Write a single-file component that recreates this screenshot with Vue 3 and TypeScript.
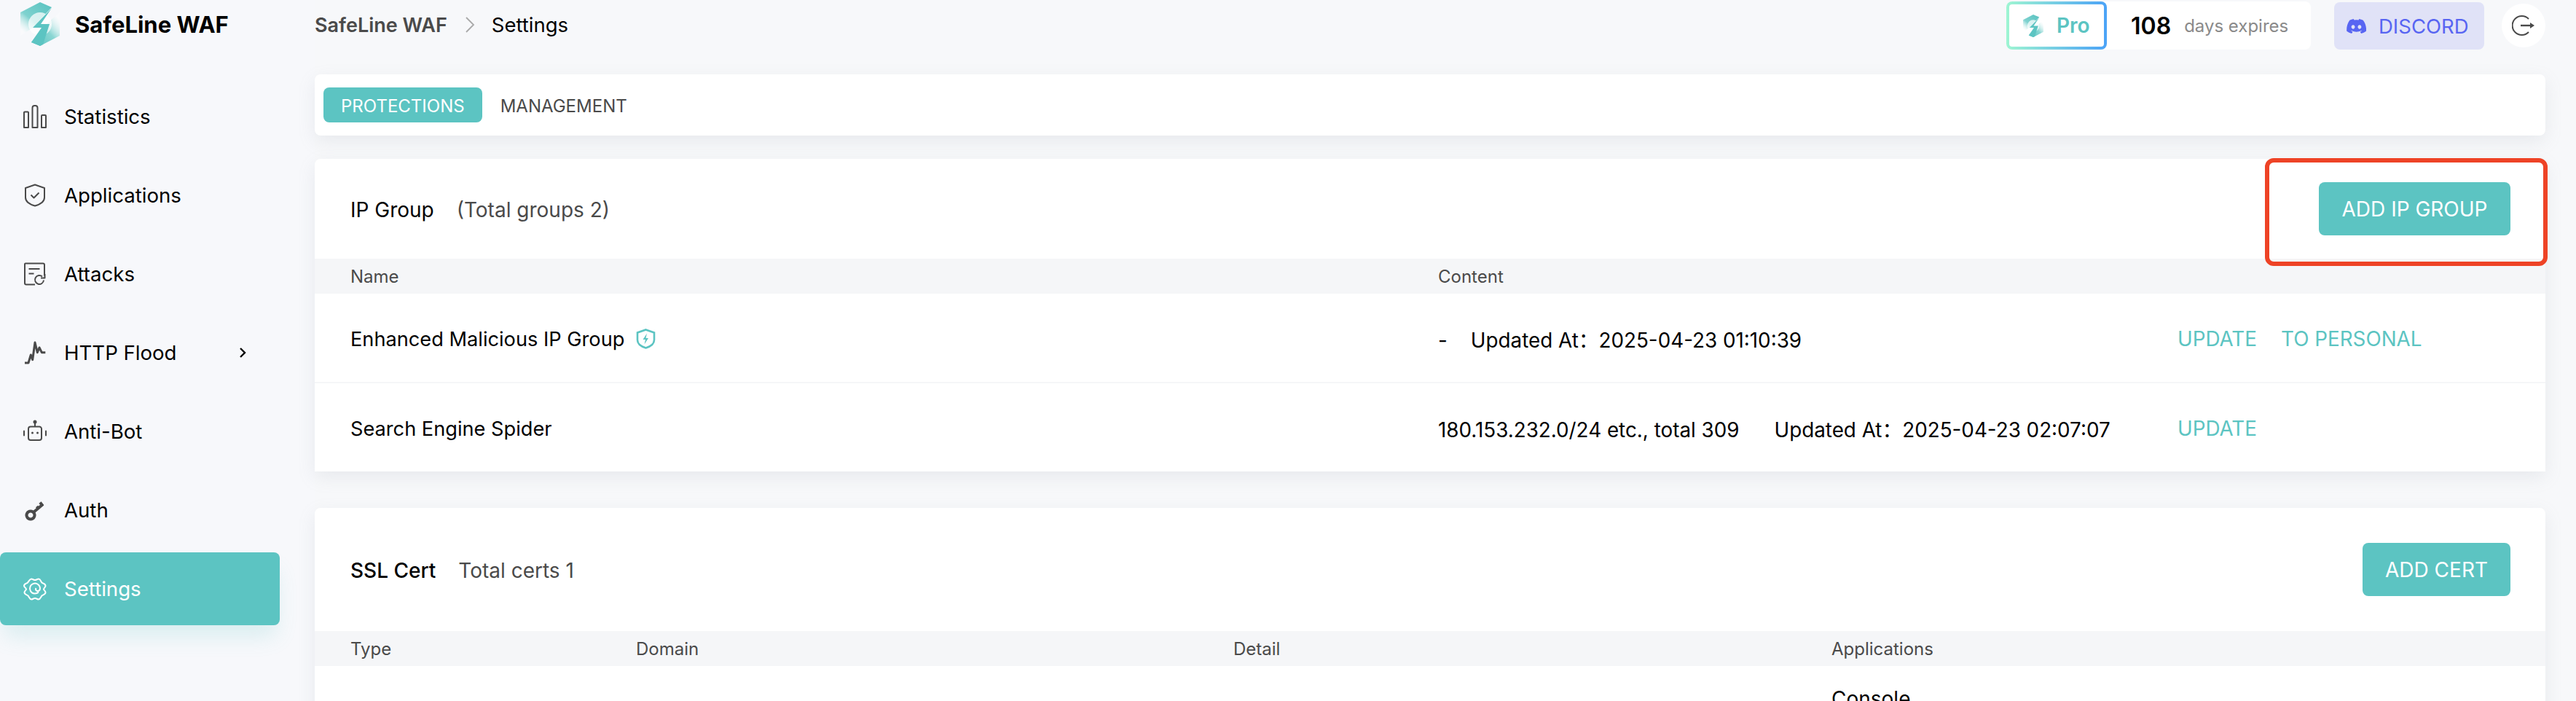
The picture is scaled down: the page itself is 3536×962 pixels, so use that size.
<script setup lang="ts">
interface NavItem {
  label: string
  active?: boolean
  arrow?: boolean
  strokeWidth?: number
  strokes: string[]
  fills?: string[]
}

const navItems: NavItem[] = [
  {
    label: 'Statistics',
    strokes: [
      'M1 10.5a1 1 0 0 1 1-1h4a1 1 0 0 1 1 1V31H1z',
      'M12.5 4a3 3 0 0 1 3-3h1a3 3 0 0 1 3 3v27h-7z',
      'M25 15a1 1 0 0 1 1-1h4a1 1 0 0 1 1 1v16h-6z'
    ]
  },
  {
    label: 'Applications',
    strokes: [
      'M16 1.5 29 6v13c0 5.5-6 9.5-13 11.5C9 28.5 3 24.5 3 19V6z',
      'M10.5 15.5l4 4 7-7'
    ]
  },
  {
    label: 'Attacks',
    strokes: [
      'M16 30.5H4a2 2 0 0 1-2-2v-26a1 1 0 0 1 1-1h24a2 2 0 0 1 2 2v15',
      'M7.5 9h15',
      'M7.5 15.5h7',
      'M28 24.5a6 6 0 1 1-2-5',
      'M24 21.5h5.5V16'
    ]
  },
  {
    label: 'HTTP Flood',
    arrow: true,
    strokeWidth: 3,
    strokes: ['M2 30h5l3.3-11 2.4 6.7L16 2l3.3 13.7L22 9l3.3 6.7h5']
  },
  {
    label: 'Anti-Bot',
    strokes: [
      'M7 12.5a3 3 0 0 1 3-3h12a3 3 0 0 1 3 3V25a3 3 0 0 1-3 3H10a3 3 0 0 1-3-3z',
      'M16 9V4'
    ],
    fills: [
      'M13.5 3a2.5 2.5 0 1 0 5 0 2.5 2.5 0 0 0-5 0z',
      'M11 18a1.5 1.5 0 1 0 3 0 1.5 1.5 0 0 0-3 0z',
      'M18 18a1.5 1.5 0 1 0 3 0 1.5 1.5 0 0 0-3 0z',
      'M0 15.5a1 1 0 0 1 2 0v6a1 1 0 0 1-2 0z',
      'M30 15.5a1 1 0 0 1 2 0v6a1 1 0 0 1-2 0z'
    ]
  },
  {
    label: 'Auth',
    strokeWidth: 4,
    strokes: [
      'M14 19 27 8',
      'M21.5 14.5 18.5 11',
      'M26.5 10 23 5.5',
      'M10 17.5a5.5 5.5 0 1 0 .01 0z'
    ]
  },
  {
    label: 'Settings',
    active: true,
    strokes: [
      'M11 2.5c2 0 3 1.5 5 1.5s3-1.5 5-1.5c2.5 0 3 3.5 4.5 5s5 1.5 5 4.5c0 2-2.5 3-2.5 4.5s2.5 2.5 2.5 4.5c0 3-3.5 3-5 4.5s-2 5-4.5 5c-2 0-3-1.5-5-1.5s-3 1.5-5 1.5c-2.5 0-3-3.5-4.5-5s-5-1.5-5-4.5c0-2 2.5-3 2.5-4.5S1 14 1 12c0-3 3.5-3 5-4.5s2.5-5 5-5z',
      'M21 20.5a7 7 0 1 1 2-5c0 2.5-2 4-4 3.5-2-.5-2.5-2.5-1.5-4'
    ]
  }
]

const ipRows = [
  { name: 'Enhanced Malicious IP Group', builtin: true, summary: '-', updated: '2025-04-23 01:10:39', actions: ['UPDATE', 'TO PERSONAL'] },
  { name: 'Search Engine Spider', builtin: false, summary: '180.153.232.0/24 etc., total 309', updated: '2025-04-23 02:07:07', actions: ['UPDATE'] }
]
</script>

<template>
  <div class="page">
    <aside class="sidebar">
      <div class="brand">
        <svg class="brand-logo" viewBox="0 0 54 60" aria-hidden="true">
          <defs>
            <linearGradient id="hexA" x1="0.8" y1="0" x2="0.1" y2="0.9">
              <stop offset="0" stop-color="#5cc4c2" />
              <stop offset="0.6" stop-color="#7fd2cf" />
              <stop offset="1" stop-color="#ffffff" stop-opacity="0.35" />
            </linearGradient>
            <linearGradient id="hexB" x1="0.25" y1="1" x2="1" y2="0.2">
              <stop offset="0" stop-color="#5cc4c2" />
              <stop offset="0.5" stop-color="#8ad6d3" />
              <stop offset="1" stop-color="#ffffff" stop-opacity="0.3" />
            </linearGradient>
          </defs>
          <path d="M27 0 43 7 17 35 0 46V14z" fill="url(#hexA)" />
          <path d="M54 14V46L27 60 15 55 40 26z" fill="url(#hexB)" />
          <circle cx="27" cy="30" r="16" fill="#ffffff" opacity="0.72" />
          <path d="M43 8 17 35H29L15 55 27 60 31 58 40 30H28z" fill="#5cc4c2" />
        </svg>
        <span class="brand-name">SafeLine WAF</span>
      </div>
      <nav class="nav">
        <a v-for="item in navItems" :key="item.label" class="nav-item" :class="{ 'is-active': item.active }">
          <svg class="nav-icon" viewBox="0 0 32 32" aria-hidden="true">
            <path
              v-for="d in item.strokes"
              :key="d"
              :d="d"
              fill="none"
              stroke="currentColor"
              :stroke-width="item.strokeWidth ?? 2"
              stroke-linejoin="round"
            />
            <path v-for="d in item.fills" :key="d" :d="d" fill="currentColor" />
          </svg>
          <span class="nav-label">{{ item.label }}</span>
          <svg v-if="item.arrow" class="nav-arrow" viewBox="0 0 10 14" aria-hidden="true">
            <path d="M2 1l6 6-6 6" fill="none" stroke="#000" stroke-width="2.4" />
          </svg>
        </a>
      </nav>
    </aside>

    <main class="main">
      <header class="topbar">
        <div class="crumbs">
          <span class="crumb-root">SafeLine WAF</span>
          <svg class="crumb-sep" viewBox="0 0 14 24" aria-hidden="true">
            <path d="M2 2l10 10L2 22" fill="none" stroke="#a9a9a9" stroke-width="1.8" />
          </svg>
          <span class="crumb-current">Settings</span>
        </div>
        <div class="license">
          <div class="pro-tag">
            <svg class="pro-logo" viewBox="0 0 54 60" aria-hidden="true">
              <path d="M27 0 43 7 17 35 0 46V14z" fill="url(#hexA)" />
              <path d="M54 14V46L27 60 15 55 40 26z" fill="url(#hexB)" />
              <circle cx="27" cy="30" r="16" fill="#ffffff" opacity="0.72" />
              <path d="M43 8 17 35H29L15 55 27 60 31 58 40 30H28z" fill="#5cc4c2" />
            </svg>
            <span>Pro</span>
          </div>
          <strong class="license-days">108</strong>
          <span class="license-text">days expires</span>
        </div>
        <a class="discord">
          <svg class="discord-icon" viewBox="0 0 24 18" aria-hidden="true">
            <path d="M20.3 1.5A20 20 0 0 0 15.4 0l-.6 1.3a18 18 0 0 0-5.5 0L8.6 0a20 20 0 0 0-4.9 1.5C.6 6.1-.3 10.6.1 15a20 20 0 0 0 6.1 3l1.3-2.1a13 13 0 0 1-2-1l.5-.4a14.3 14.3 0 0 0 12.2 0l.5.4a13 13 0 0 1-2 1l1.3 2.1a20 20 0 0 0 6.1-3c.5-5.100-.9-9.500-3.800-13.500zM8 12.3c-1.2 0-2.2-1.1-2.2-2.4S6.800 7.500 8 7.500s2.200 1.100 2.200 2.400-1 2.400-2.200 2.400zm8 0c-1.200 0-2.200-1.100-2.200-2.400s1-2.400 2.200-2.400 2.200 1.100 2.200 2.400-1 2.400-2.200 2.400z" fill="#5865f2" />
          </svg>
          DISCORD
        </a>
        <button class="logout" type="button" aria-label="Log out">
          <svg viewBox="0 0 32 30" aria-hidden="true">
            <path d="M23 6A13 13 0 1 0 23 24" fill="none" stroke="#4a4a4a" stroke-width="2" />
            <path d="M12 15h14" stroke="#4a4a4a" stroke-width="2.4" />
            <path d="M25 11l6 4-6 4z" fill="#4a4a4a" />
          </svg>
        </button>
      </header>

      <div class="tabs card">
        <span class="tab is-active">PROTECTIONS</span>
        <span class="tab">MANAGEMENT</span>
      </div>

      <section class="card section ip-section">
        <div class="section-head">
          <span class="section-title">IP Group</span>
          <span class="section-sub ip-sub">(Total groups 2)</span>
          <button class="primary ip-add" type="button">ADD IP GROUP</button>
        </div>
        <div class="thead ip-grid">
          <span>Name</span>
          <span>Content</span>
        </div>
        <div v-for="row in ipRows" :key="row.name" class="ip-row ip-grid">
          <span class="ip-name">
            {{ row.name }}
            <svg v-if="row.builtin" class="builtin" viewBox="0 0 27 28" aria-hidden="true">
              <path d="M13.5 1.5 25 5.5v10c0 5-5 9-11.5 11C7 24.5 2 20.500 2 15.5v-10z" fill="none" stroke="#5cc4c2" stroke-width="2.6" />
              <path d="M15 6.5 9.5 15H13l-1.500 6.500L17 13h-3.500z" fill="#5cc4c2" />
            </svg>
          </span>
          <span class="ip-content">
            <span class="ip-summary" :class="{ 'is-empty': row.summary === '-' }">{{ row.summary }}</span>
            <span class="ip-updated">Updated At：</span>
            <span>{{ row.updated }}</span>
          </span>
          <span class="ip-actions">
            <a v-for="action in row.actions" :key="action">{{ action }}</a>
          </span>
        </div>
        <div class="highlight" aria-hidden="true"></div>
      </section>

      <section class="card section cert-section">
        <div class="section-head">
          <span class="section-title is-medium">SSL Cert</span>
          <span class="section-sub cert-sub">Total certs 1</span>
          <button class="primary cert-add" type="button">ADD CERT</button>
        </div>
        <div class="thead cert-grid">
          <span>Type</span>
          <span>Domain</span>
          <span>Detail</span>
          <span>Applications</span>
        </div>
        <div class="cert-row cert-grid">
          <span></span>
          <span></span>
          <span></span>
          <span>Console</span>
        </div>
      </section>
    </main>
  </div>
</template>

<style scoped>
.page {
  background: #f7f8fa;
  color: #000;
  display: flex;
  font-family: Inter, 'Noto Sans CJK SC', sans-serif;
  height: 962px;
  overflow: hidden;
  width: 3536px;
}

.sidebar {
  background: #f7f8fb;
  flex: 0 0 432px;
}

.brand {
  align-items: center;
  display: flex;
  gap: 21px;
  height: 66px;
  margin-bottom: 44px;
  padding-left: 28px;
}

.brand-logo {
  height: 60px;
  width: 54px;
}

.brand-name {
  font-size: 31px;
  font-weight: 700;
  white-space: nowrap;
}

.nav {
  display: flex;
  flex-direction: column;
  gap: 8px;
  width: 384px;
}

.nav-item {
  align-items: center;
  border-radius: 8px;
  color: #4a4a4a;
  display: flex;
  height: 100px;
  padding-left: 32px;
}

.nav-icon {
  flex: 0 0 32px;
  height: 32px;
  width: 32px;
}

.nav-label {
  color: #000;
  font-size: 27.6px;
  margin-left: 24px;
}

.nav-arrow {
  height: 14px;
  margin-left: 86px;
  width: 10px;
}

.nav-item.is-active {
  background: #5cc4c2;
  box-shadow: 0 20px 30px -6px rgba(92, 196, 194, 0.2);
  color: #fff;
}

.nav-item.is-active .nav-label {
  color: #fff;
}

.main {
  flex: 1;
  min-width: 0;
  padding-right: 42px;
}

.topbar {
  align-items: flex-start;
  box-sizing: border-box;
  display: flex;
  height: 102px;
  padding-top: 2px;
}

.crumbs {
  align-items: center;
  box-sizing: border-box;
  display: flex;
  height: 66px;
  margin-right: auto;
  padding-bottom: 2px;
}

.crumb-root {
  color: #4a4a4a;
  font-size: 27px;
  font-weight: 600;
}

.crumb-sep {
  height: 24px;
  margin: 0 23px 0 24px;
  width: 14px;
}

.crumb-current {
  font-size: 27.5px;
}

.license {
  align-items: center;
  background: #fff;
  border-radius: 8px;
  display: flex;
  height: 66px;
  width: 418px;
}

.pro-tag {
  align-items: center;
  background: linear-gradient(#fff, #fff) padding-box, linear-gradient(90deg, #9ef5d2, #4ba3f7) border-box;
  border: 4px solid transparent;
  border-radius: 8px;
  box-sizing: border-box;
  color: #5cc4c2;
  display: flex;
  flex: 0 0 138px;
  font-size: 28px;
  font-weight: 600;
  gap: 18px;
  height: 66px;
  padding-left: 19px;
}

.pro-logo {
  height: 31px;
  width: 28px;
}

.license-days {
  font-size: 32px;
  font-weight: 600;
  margin-left: 33px;
}

.license-text {
  color: #8a8a8a;
  font-size: 24px;
  margin-left: 18px;
}

.discord {
  align-items: center;
  background: #e0e2f7;
  border-radius: 8px;
  box-sizing: border-box;
  color: #5865f2;
  display: flex;
  font-size: 27.5px;
  font-weight: 400;
  gap: 17px;
  height: 65px;
  margin: 1px 24px 0 32px;
  padding-left: 17px;
  width: 206px;
}

.discord-icon {
  height: 20px;
  width: 27px;
}

.logout {
  align-items: center;
  background: #fff;
  border: 0;
  border-radius: 50%;
  display: flex;
  height: 60px;
  justify-content: center;
  margin-top: 3px;
  padding: 0;
  width: 60px;
}

.logout svg {
  height: 30px;
  width: 32px;
}

.card {
  background: #fff;
  border-radius: 8px;
  box-shadow: 0 8px 24px rgba(145, 150, 165, 0.14);
}

.tabs {
  align-items: center;
  display: flex;
  gap: 1px;
  height: 84px;
  margin-bottom: 32px;
  padding-left: 12px;
}

.tab {
  border-radius: 8px;
  color: #4a4a4a;
  font-size: 24px;
  height: 48px;
  line-height: 51px;
  padding: 0 24px;
}

.tab.is-active {
  background: #5cc4c2;
  color: #fff;
}

.section {
  border-bottom-left-radius: 0;
  border-bottom-right-radius: 0;
  margin-bottom: 50px;
  position: relative;
}

.section-head {
  align-items: center;
  display: flex;
  height: 137px;
  padding: 0 48px 0 49px;
}

.cert-section .section-head {
  height: 169px;
}

.section-title {
  font-size: 28px;
  padding-top: 2px;
}

.section-title.is-medium {
  font-weight: 500;
}

.section-sub {
  color: #4a4a4a;
  font-size: 28px;
  padding-top: 2px;
}

.ip-sub {
  margin-left: 31px;
}

.cert-sub {
  margin-left: 31px;
}

.primary {
  background: #5cc4c2;
  border: 0;
  border-radius: 8px;
  color: #fff;
  font-family: inherit;
  font-size: 28px;
  height: 73px;
  margin-left: auto;
  padding: 0;
}

.ip-add {
  width: 263px;
}

.cert-add {
  width: 203px;
}

.thead {
  background: #f5f6f8;
  color: #4a4a4a;
  font-size: 24px;
  height: 48px;
}

.thead,
.ip-row,
.cert-row {
  align-items: center;
  display: grid;
  padding-left: 49px;
}

.ip-grid {
  grid-template-columns: 1493px 1015px 1fr;
}

.cert-grid {
  grid-template-columns: 392px 820px 821px 1fr;
}

.ip-row {
  border-top: 2px solid #f5f6f8;
  box-sizing: border-box;
  font-size: 27.8px;
  height: 123px;
  padding-top: 3px;
}

.thead + .ip-row {
  border-top: 0;
  height: 121px;
}

.ip-name {
  align-items: center;
  display: flex;
  font-size: 27.2px;
  gap: 16px;
}

.builtin {
  height: 28px;
  width: 27px;
}

.ip-content {
  align-items: baseline;
  display: flex;
  white-space: nowrap;
}

.ip-summary {
  margin-right: 48px;
}

.ip-summary.is-empty {
  margin-right: 32px;
}

.ip-actions {
  color: #5cc4c2;
  display: flex;
  gap: 33px;
}

.highlight {
  border: 6px solid #ee4326;
  border-radius: 12px;
  box-sizing: border-box;
  height: 148px;
  pointer-events: none;
  position: absolute;
  right: -3px;
  top: -1px;
  width: 388px;
}

.cert-row {
  font-size: 28px;
  height: 90px;
}
</style>

<style>
html,
body {
  background: #f7f8fa;
  margin: 0;
}
</style>
